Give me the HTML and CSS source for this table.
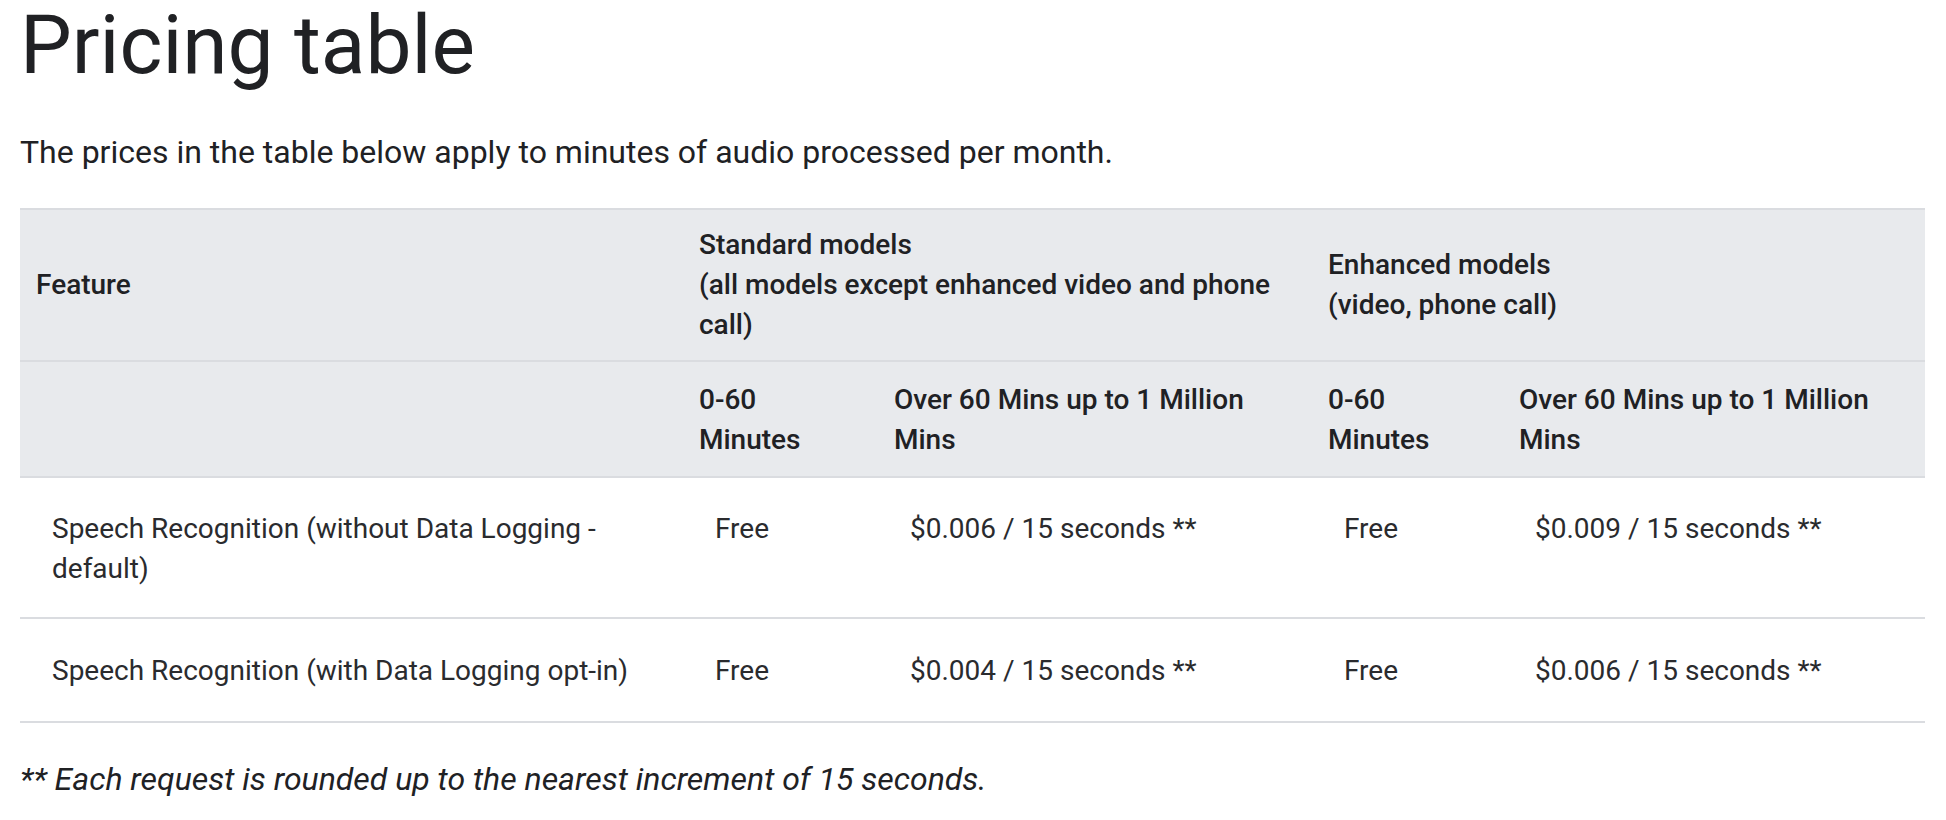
FILE: index.html
```html
<!DOCTYPE html>
<html lang="en">
<head>
<meta charset="utf-8">
<title>Pricing table</title>
<link rel="stylesheet" href="styles.css">
</head>
<body>
<main class="page">
  <h1 class="title">Pricing table</h1>
  <p class="intro">The prices in the table below apply to minutes of audio processed per month.</p>
  <table class="pricing">
    <colgroup>
      <col class="c-feature">
      <col class="c-std-low">
      <col class="c-std-high">
      <col class="c-enh-low">
      <col class="c-enh-high">
    </colgroup>
    <thead>
      <tr class="head-top">
        <th>Feature</th>
        <th colspan="2">Standard models<br>(all models except enhanced video and phone call)</th>
        <th colspan="2">Enhanced models<br>(video, phone call)</th>
      </tr>
      <tr class="head-sub">
        <th></th>
        <th>0-60 Minutes</th>
        <th>Over 60 Mins up to 1 Million Mins</th>
        <th>0-60 Minutes</th>
        <th>Over 60 Mins up to 1 Million Mins</th>
      </tr>
    </thead>
    <tbody>
      <tr class="row-tall">
        <td>Speech Recognition (without Data Logging - default)</td>
        <td>Free</td>
        <td>$0.006 / 15 seconds **</td>
        <td>Free</td>
        <td>$0.009 / 15 seconds **</td>
      </tr>
      <tr class="row-short">
        <td>Speech Recognition (with Data Logging opt-in)</td>
        <td>Free</td>
        <td>$0.004 / 15 seconds **</td>
        <td>Free</td>
        <td>$0.006 / 15 seconds **</td>
      </tr>
    </tbody>
  </table>
  <p class="note">** Each request is rounded up to the nearest increment of 15 seconds.</p>
</main>
</body>
</html>
```
FILE: styles.css
```css
html, body {
  margin: 0;
  padding: 0;
  background: #ffffff;
}

body {
  font-family: Roboto, "Liberation Sans", Arial, sans-serif;
  color: #202124;
}

.page {
  padding: 0 20px;
}

.title {
  margin: 0;
  font-size: 82px;
  line-height: 90px;
  font-weight: 400;
  color: #202124;
}

.intro {
  margin: 42px 0 0 0;
  font-size: 32px;
  line-height: 40px;
  color: #202124;
}

.pricing {
  margin-top: 36px;
  width: 1905px;
  border-collapse: collapse;
  table-layout: fixed;
  line-height: 40px;
}

.c-feature { width: 663px; }
.c-std-low { width: 195px; }
.c-std-high { width: 434px; }
.c-enh-low { width: 191px; }
.c-enh-high { width: 422px; }

.pricing thead tr {
  background: #e8eaed;
}

.pricing th {
  text-align: left;
  vertical-align: middle;
  font-size: 28px;
  font-weight: 500;
  color: #202124;
  padding: 15px 16px;
  border-top: 2px solid #dadce0;
  border-bottom: 2px solid #dadce0;
}

.head-sub th {
  vertical-align: top;
  padding: 18px 16px 16px 16px;
}

.pricing td {
  vertical-align: top;
  font-size: 28px;
  color: #2a2b2e;
  padding: 31px 16px 28px 32px;
  border-bottom: 2px solid #dadce0;
}

.row-short td {
  padding: 32px 16px 30px 32px;
}

.note {
  margin: 36px 0 0 0;
  font-size: 32px;
  line-height: 40px;
  font-style: italic;
  color: #202124;
}
```
